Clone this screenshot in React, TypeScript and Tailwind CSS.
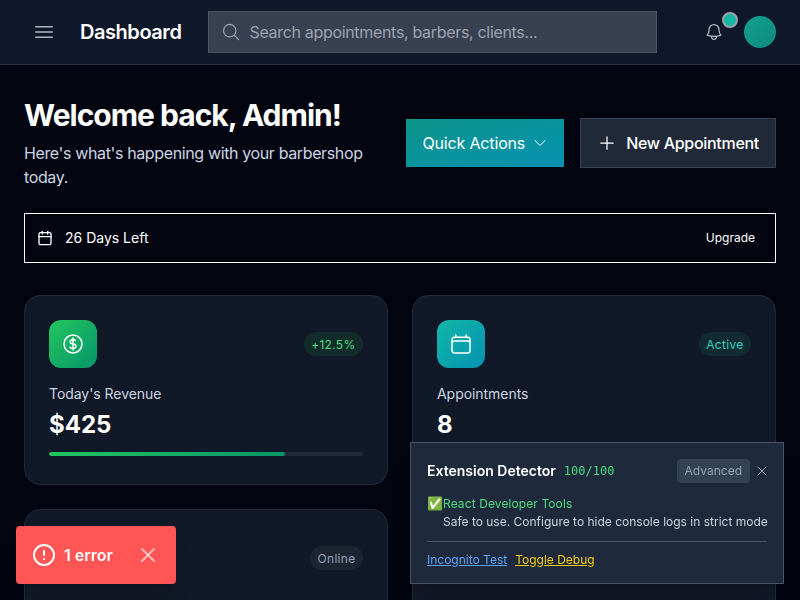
import {
  HiOutlineBars3,
  HiOutlineBell,
  HiOutlineCalendar,
  HiOutlineChevronDown,
  HiOutlineCurrencyDollar,
  HiOutlineMagnifyingGlass,
  HiOutlinePlus,
  HiOutlineUsers,
  HiOutlineXMark,
  HiOutlineStar,
} from 'react-icons/hi2';
import { Calendar, CircleAlert, X } from 'lucide-react';
import type { ReactNode } from 'react';

type Stat = {
  id: string;
  label?: string;
  value?: string;
  badge?: string;
  badgeClass?: string;
  iconClass: string;
  barClass?: string;
  barWidth?: string;
  icon: ReactNode;
};

// the lower two cards run off the bottom of the window, only their top shows
const stats: Stat[] = [
  {
    id: 'revenue',
    label: "Today's Revenue",
    value: '$425',
    badge: '+12.5%',
    badgeClass: 'bg-[#122c2b] text-[#4ade80]',
    iconClass: 'bg-gradient-to-br from-[#22c55e] to-[#059669]',
    barClass: 'bg-gradient-to-r from-[#22c55e] to-[#059669]',
    barWidth: '75%',
    icon: <HiOutlineCurrencyDollar className="w-6 h-6 text-white" />,
  },
  {
    id: 'appointments',
    label: 'Appointments',
    value: '8',
    badge: 'Active',
    badgeClass: 'bg-[#122b32] text-[#2dd4bf]',
    iconClass: 'bg-gradient-to-br from-[#14b8a6] to-[#0891b2]',
    barClass: 'bg-gradient-to-r from-[#14b8a6] to-[#0891b2]',
    barWidth: '60%',
    icon: <HiOutlineCalendar className="w-6 h-6 text-white" />,
  },
  {
    id: 'barbers',
    badge: 'Online',
    badgeClass: 'bg-[#1c2432] text-[#94a3b8]',
    iconClass: 'bg-gradient-to-br from-[#6366f1] to-[#4f46e5]',
    icon: <HiOutlineUsers className="w-6 h-6 text-white" />,
  },
  {
    id: 'rating',
    iconClass: 'bg-gradient-to-br from-[#f59e0b] to-[#d97706]',
    icon: <HiOutlineStar className="w-6 h-6 text-white" />,
  },
];

function StatCard({ stat }: { stat: Stat }) {
  return (
    <div className="rounded-2xl border border-[#1f2937] bg-[#111827] p-6 h-[190px]">
      <div className="flex items-center justify-between mb-4">
        <div className={`w-12 h-12 rounded-xl flex items-center justify-center ${stat.iconClass}`}>{stat.icon}</div>
        {stat.badge && (
          <span className={`px-[7.5px] h-6 rounded-full text-xs leading-[25px] tracking-[0.3px] ${stat.badgeClass}`}>{stat.badge}</span>
        )}
      </div>
      {stat.label && (
        <>
          <p className="text-sm leading-5 text-[#cbd5e1] mb-[5px] tracking-[-0.05px]">{stat.label}</p>
          <p className="text-2xl leading-8 font-bold text-white">{stat.value}</p>
          <div className="mt-[11px] h-1 rounded-full bg-[#1f2937] overflow-hidden">
            <div className={`h-full rounded-full ${stat.barClass}`} style={{ width: stat.barWidth }} />
          </div>
        </>
      )}
    </div>
  );
}

export default function App() {
  return (
    <div className="h-screen overflow-hidden bg-[#020510] font-['Inter',sans-serif] text-white">
      <header className="h-[65px] border-b border-[#293242] bg-[#0f172a] flex items-center pl-8 pr-6">
        <HiOutlineBars3 className="w-6 h-6 text-[#b0b8c4] shrink-0" />
        <h2 className="ml-[24px] text-xl leading-7 font-semibold text-white tracking-[-0.45px]">Dashboard</h2>
        <div className="ml-[27px] w-[449px] h-[42px] border border-[#4b5563] bg-[#374151] flex items-center pl-[12px] gap-[8px]">
          <HiOutlineMagnifyingGlass className="w-5 h-5 text-[#9ca3af]" />
          <span className="text-base text-[#9ca3af] tracking-[-0.32px]">Search appointments, barbers, clients...</span>
        </div>
        <div className="ml-auto flex items-center">
          <div className="relative w-5 h-5 mr-[20px]">
            <HiOutlineBell className="w-5 h-5 text-[#b0b8c4]" />
            <span className="absolute -top-[10px] -right-[14px] w-4 h-4 rounded-full bg-[#14b8a6] border-2 border-[#9ca3af]" />
          </div>
          <div className="w-8 h-8 rounded-full bg-gradient-to-br from-[#14a08f] to-[#0d8a7d]" />
        </div>
      </header>

      <main className="px-6 pt-8">
        <div className="flex items-center justify-between">
          <div className="w-[350px]">
            <h1 className="text-3xl leading-9 font-bold text-white mb-2 tracking-[-1px]">Welcome back, Admin!</h1>
            <p className="text-base leading-6 text-[#cbd5e1] tracking-[-0.37px]">Here's what's happening with your barbershop today.</p>
          </div>
          <div className="flex items-center gap-4">
            <button className="h-12 pl-4 pr-4 flex items-center gap-[7px] bg-gradient-to-br from-[#0d9488] to-[#0891b2] text-base text-white tracking-[-0.16px]">
              Quick Actions
              <HiOutlineChevronDown className="w-4 h-4" />
            </button>
            <button className="h-[50px] px-4 flex items-center gap-[9px] border border-[#374151] bg-[#1f2937] text-base font-medium text-white tracking-[-0.3px]">
              <HiOutlinePlus className="w-5 h-5" />
              New Appointment
            </button>
          </div>
        </div>

        <div className="mt-6 h-[50px] border border-white flex items-center justify-between px-3">
          <div className="flex items-center gap-3 text-sm">
            <Calendar className="w-4 h-4" />
            26 Days Left
          </div>
          <span className="text-xs pr-2">Upgrade</span>
        </div>

        <div className="mt-8 grid grid-cols-2 gap-6">
          {stats.map((s) => (
            <StatCard key={s.id} stat={s} />
          ))}
        </div>
      </main>

      <div className="fixed left-4 bottom-4 w-40 h-[58px] rounded bg-[#ff5555] flex items-center px-4 shadow-xl">
        <CircleAlert className="w-6 h-6 text-white" />
        <span className="ml-2 text-base font-semibold">1 error</span>
        <X className="w-6 h-6 ml-auto text-white/60" />
      </div>

      <div className="fixed right-4 bottom-4 w-[374px] h-[142px] border border-[#475569] bg-[#1e293b] px-4 pt-4 shadow-xl">
        <div className="flex items-center h-6">
          <span className="text-sm font-semibold">Extension Detector</span>
          <span className="ml-2 text-xs font-['DejaVu_Sans_Mono',monospace] text-[#4ade80]">100/100</span>
          <span className="ml-auto h-6 px-2 rounded bg-[#334155] text-xs leading-6 text-[#94a3b8]">Advanced</span>
          <HiOutlineXMark className="w-4 h-4 ml-1 -mr-[3px] text-[#94a3b8]" />
        </div>
        <div className="mt-3 text-xs leading-[18px]">
          <div className="text-[#4ade80] tracking-[0.1px]"><span className="text-[13px] leading-none tracking-normal">✅</span>React Developer Tools</div>
          <div className="pl-4 text-[#cbd5e1] whitespace-nowrap">Safe to use. Configure to hide console logs in strict mode</div>
        </div>
        <div className="mt-[10px] pt-[10px] border-t border-[#475569] text-xs flex gap-2">
          <a className="underline text-[#60a5fa]">Incognito Test</a>
          <a className="underline text-[#facc15]">Toggle Debug</a>
        </div>
      </div>
    </div>
  );
}
